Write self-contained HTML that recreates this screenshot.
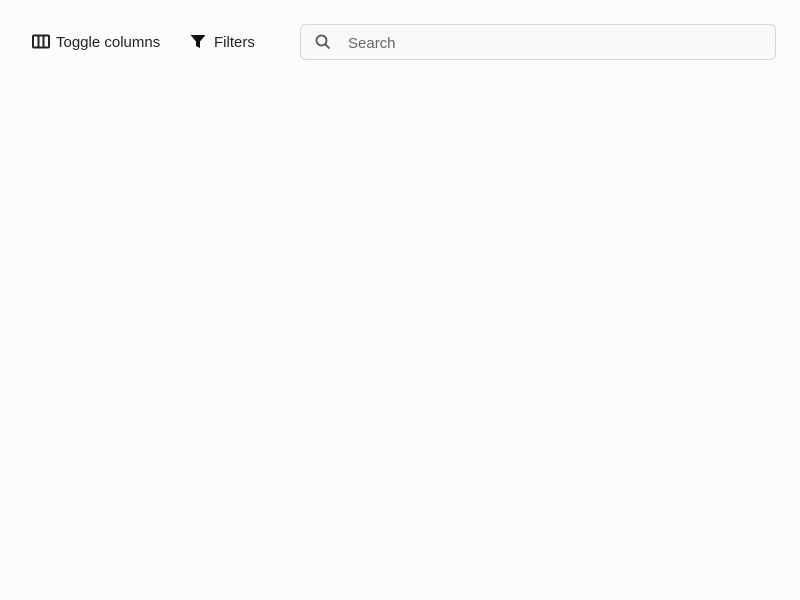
<!DOCTYPE html>
<html><head><style>
body{margin:0;width:800px;height:600px;background:#fcfcfc;font-family:"Liberation Sans",sans-serif;position:relative;overflow:hidden}
.t{position:absolute;top:34px;font-size:15px;color:#222;line-height:18px}
.s{position:absolute;left:300px;top:24px;width:474px;height:34px;border:1px solid #d8d8dc;border-radius:6px;background:#f9f9fa}
</style></head><body>
<svg style="position:absolute;left:32px;top:34px" width="18" height="15" viewBox="0 0 18 15"><rect x="1" y="1.5" width="16" height="12" rx="1" fill="none" stroke="#222" stroke-width="2"/><line x1="6.5" y1="2" x2="6.5" y2="13" stroke="#222" stroke-width="2"/><line x1="11.5" y1="2" x2="11.5" y2="13" stroke="#222" stroke-width="2"/></svg>
<div class="t" style="left:56px">Toggle columns</div>
<svg style="position:absolute;left:190px;top:34px" width="16" height="15" viewBox="0 0 16 15"><path d="M0.5 1h15l-5.5 6.5v6.5l-4-2v-4.5z" fill="#111"/></svg>
<div class="t" style="left:214px">Filters</div>
<div class="s"></div>
<svg style="position:absolute;left:315px;top:34px" width="16" height="16" viewBox="0 0 16 16"><circle cx="6.5" cy="6.5" r="5" fill="none" stroke="#555" stroke-width="1.8"/><line x1="10.2" y1="10.2" x2="14.5" y2="14.5" stroke="#555" stroke-width="1.8"/></svg>
<div class="t" style="left:348px;top:35px;color:#666">Search</div>
</body></html>
